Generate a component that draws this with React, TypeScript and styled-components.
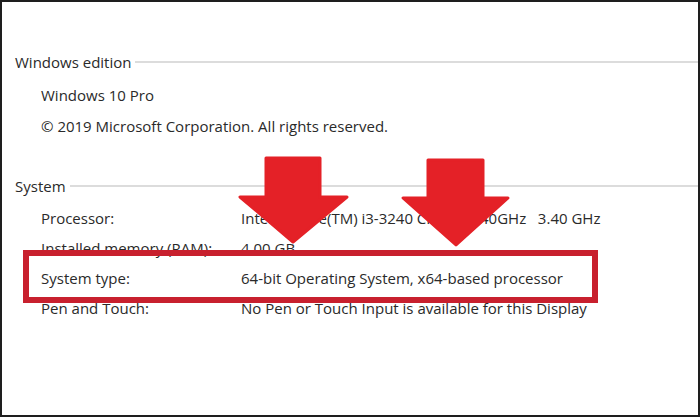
import styled, { createGlobalStyle } from 'styled-components'

const GlobalStyle = createGlobalStyle`
  html, body {
    margin: 0;
    padding: 0;
    background: #fff;
  }
  body {
    font-family: "Open Sans", "Noto Sans", "Liberation Sans", sans-serif;
  }
`

const Frame = styled.div`
  position: relative;
  box-sizing: border-box;
  width: 700px;
  height: 417px;
  overflow: hidden;
  background: #fff;
  border: 2px solid #1e1e1e;
  padding: 50px 0 0 13px;
  color: #2a2a2a;
  font-size: 15px;
`

const Section = styled.section<{ $gap: number }>`
  display: flex;
  flex-direction: column;
  margin-bottom: ${p => p.$gap}px;
`

const SectionHeader = styled.div`
  display: flex;
  align-items: center;
  height: 20px;
  line-height: 20px;
`

const HeaderRule = styled.div`
  flex: 1;
  height: 2px;
  margin-left: 4px;
  background: #dcdcdc;
`

const Rows = styled.div<{ $top: number }>`
  display: flex;
  flex-direction: column;
  padding-left: 26px;
  margin-top: ${p => p.$top}px;
`

const Row = styled.div<{ $height: number; $highlight?: boolean }>`
  position: relative;
  display: flex;
  height: ${p => p.$height}px;
  line-height: ${p => p.$height}px;
  white-space: nowrap;

  ${p => p.$highlight && `
    &::after {
      content: "";
      position: absolute;
      left: -18px;
      top: -13px;
      width: 575px;
      height: 53px;
      box-sizing: border-box;
      border: 6px solid #c8202e;
      z-index: 2;
    }
  `}
`

const Label = styled.span`
  width: 200px;
  flex-shrink: 0;
`

const Value = styled.span``

const Arrows = styled.svg`
  position: absolute;
  left: -2px;
  top: -2px;
  z-index: 3;
  pointer-events: none;
`

const ArrowShape = ({ points }: { points: string }) => (
  <polygon points={points} fill="#e42127" stroke="#e42127" strokeWidth={3} strokeLinejoin="round" />
)

export default function App() {
  return (
    <>
      <GlobalStyle />
      <Frame>
        <Section $gap={34}>
          <SectionHeader>
            Windows edition
            <HeaderRule />
          </SectionHeader>
          <Rows $top={8}>
            <Row $height={31}>Windows 10 Pro</Row>
            <Row $height={31}>© 2019 Microsoft Corporation. All rights reserved.</Row>
          </Rows>
        </Section>
        <Section $gap={0}>
          <SectionHeader>
            System
            <HeaderRule />
          </SectionHeader>
          <Rows $top={7}>
            <Row $height={30}>
              <Label>Processor:</Label>
              <Value>Intel(R) Core(TM) i3-3240 CPU @ 3.40GHz&nbsp;&nbsp;&nbsp;3.40 GHz</Value>
            </Row>
            <Row $height={30}>
              <Label>Installed memory (RAM):</Label>
              <Value>4.00 GB</Value>
            </Row>
            <Row $height={30} $highlight>
              <Label>System type:</Label>
              <Value>64-bit Operating System, x64-based processor</Value>
            </Row>
            <Row $height={30}>
              <Label>Pen and Touch:</Label>
              <Value>No Pen or Touch Input is available for this Display</Value>
            </Row>
          </Rows>
        </Section>
        <Arrows width={700} height={417} viewBox="0 0 700 417">
          <ArrowShape points="266,158 320,158 320,197 347,197 293,242 240,197 266,197" />
          <ArrowShape points="428,160 483,160 483,198 508,198 456,245 403,198 428,198" />
        </Arrows>
      </Frame>
    </>
  )
}
